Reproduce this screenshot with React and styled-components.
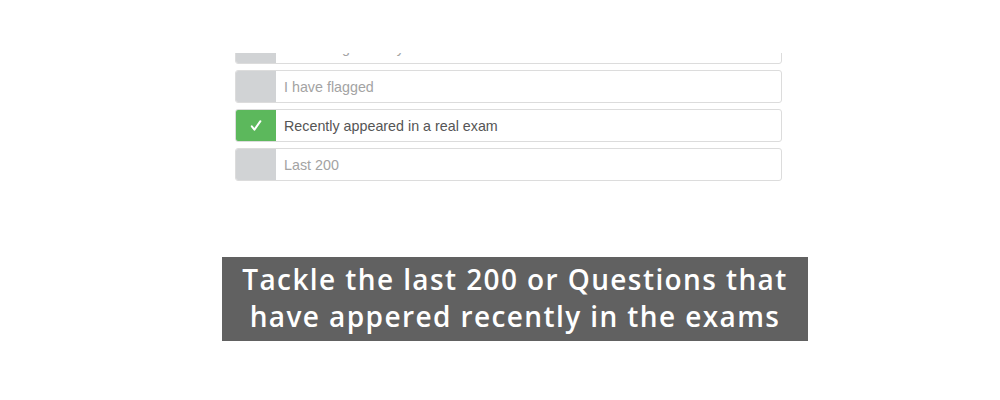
import React from 'react'
import styled, { createGlobalStyle } from 'styled-components'

const Global = createGlobalStyle`
  html, body {
    margin: 0;
    padding: 0;
    background: #fff;
  }
`

const Page = styled.div`
  width: 1000px;
  height: 400px;
  overflow: hidden;
  display: flex;
  flex-direction: column;
  padding-top: 53px;
  box-sizing: border-box;
`

const Clip = styled.div`
  overflow: hidden;
  margin-left: 235px;
  width: 547px;
  height: 129px;
`

const List = styled.div`
  display: flex;
  flex-direction: column;
  gap: 6px;
  margin-top: -22px;
`

const Row = styled.div`
  display: flex;
  height: 33px;
  box-sizing: border-box;
  border: 1px solid #dcdcdc;
  border-radius: 3px;
  overflow: hidden;
  background: #fff;
  font-family: "Liberation Sans", Arial, sans-serif;
  font-size: 14.3px;
`

const Tick = styled.div`
  width: 40px;
  flex: none;
  display: flex;
  align-items: center;
  justify-content: center;
  background: ${p => (p.$on ? '#5cb85c' : '#d1d3d5')};
`

const Label = styled.div`
  display: flex;
  align-items: center;
  padding-left: 8px;
  color: ${p => (p.$on ? '#555' : '#a3a3a3')};
`

const Caption = styled.div`
  margin: 75px 0 0 222px;
  width: 586px;
  height: 84px;
  box-sizing: border-box;
  background: #616161;
  color: #fff;
  font-family: "Open Sans", Lato, sans-serif;
  font-weight: 600;
  font-size: 28px;
  letter-spacing: 1.4px;
  line-height: 37px;
  text-align: center;
  padding-top: 4px;
  white-space: nowrap;
`

const Check = () => (
  <svg width="12" height="11" viewBox="0 0 12 11">
    <path d="M1.8 6.4 L4.4 9.6 L10.4 1.2" fill="none" stroke="#fff" strokeWidth="2" strokeLinecap="round" strokeLinejoin="round" />
  </svg>
)

const options = [
  { text: 'Got wrong recently', on: false },
  { text: 'I have flagged', on: false },
  { text: 'Recently appeared in a real exam', on: true },
  { text: 'Last 200', on: false },
]

export default function App() {
  return (
    <>
      <Global />
      <Page>
        <Clip>
          <List>
            {options.map(o => (
              <Row key={o.text}>
                <Tick $on={o.on}>{o.on && <Check />}</Tick>
                <Label $on={o.on}>{o.text}</Label>
              </Row>
            ))}
          </List>
        </Clip>
        <Caption>
          Tackle the last 200 or Questions that
          <br />
          have appered recently in the exams
        </Caption>
      </Page>
    </>
  )
}
